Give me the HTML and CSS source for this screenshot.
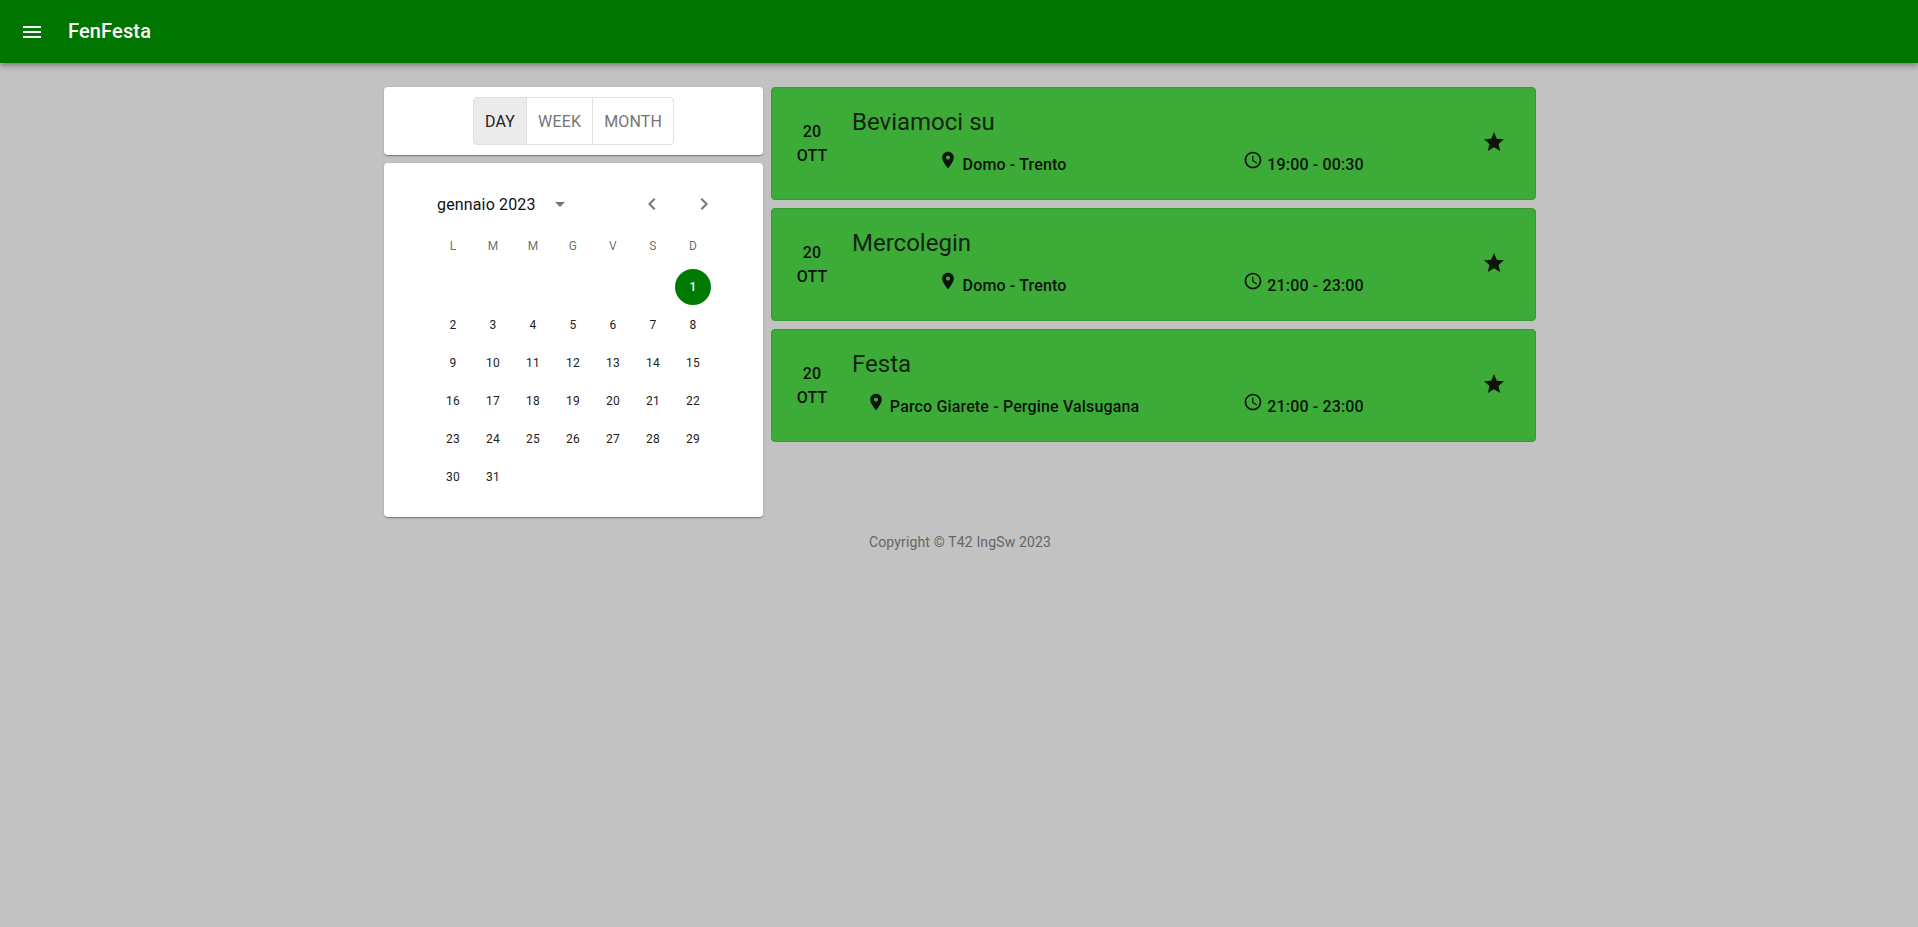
FILE: index.html
```html
<!DOCTYPE html>
<html lang="en">
<head>
    <meta charset="UTF-8">
    <title>FenFesta</title>
    <link rel="stylesheet" href="styles.css">
</head>
<body>
    <header class="app-bar">
        <svg class="menu-icon" viewBox="0 0 24 24"><path d="M3 18h18v-2H3v2zm0-5h18v-2H3v2zm0-7v2h18V6H3z"/></svg>
        <div class="brand">FenFesta</div>
    </header>

    <main class="container">
        <aside class="side">
            <div class="panel toggle-panel">
                <div class="toggle-group">
                    <button class="toggle selected">DAY</button>
                    <button class="toggle">WEEK</button>
                    <button class="toggle">MONTH</button>
                </div>
            </div>
            <div class="panel calendar">
                <div class="cal-header">
                    <span class="cal-month">gennaio 2023</span>
                    <svg class="cal-drop" viewBox="0 0 24 24"><path d="M7 10l5 5 5-5z"/></svg>
                    <svg class="cal-prev" viewBox="0 0 24 24"><path d="M15.41 7.41 14 6l-6 6 6 6 1.41-1.41L10.83 12z"/></svg>
                    <svg class="cal-next" viewBox="0 0 24 24"><path d="M10 6 8.59 7.41 13.17 12l-4.58 4.59L10 18l6-6z"/></svg>
                </div>
                <div class="cal-week">
                    <span>L</span><span>M</span><span>M</span><span>G</span><span>V</span><span>S</span><span>D</span>
                </div>
                <div class="cal-days">
                    <span></span><span></span><span></span><span></span><span></span><span></span><span class="today">1</span>
                    <span>2</span><span>3</span><span>4</span><span>5</span><span>6</span><span>7</span><span>8</span>
                    <span>9</span><span>10</span><span>11</span><span>12</span><span>13</span><span>14</span><span>15</span>
                    <span>16</span><span>17</span><span>18</span><span>19</span><span>20</span><span>21</span><span>22</span>
                    <span>23</span><span>24</span><span>25</span><span>26</span><span>27</span><span>28</span><span>29</span>
                    <span>30</span><span>31</span>
                </div>
            </div>
        </aside>

        <section class="events">
            <article class="event">
                <div class="event-date">20<br>OTT</div>
                <div class="event-body">
                    <h2 class="event-title">Beviamoci su</h2>
                    <div class="event-info">
                        <div class="info-col">
                            <svg class="info-icon" viewBox="0 0 24 24"><path d="M12 2C8.13 2 5 5.13 5 9c0 5.25 7 13 7 13s7-7.75 7-13c0-3.87-3.13-7-7-7zm0 9.5c-1.38 0-2.5-1.12-2.5-2.5s1.12-2.5 2.5-2.5 2.5 1.12 2.5 2.5-1.12 2.5-2.5 2.5z"/></svg>
                            Domo - Trento
                        </div>
                        <div class="info-col">
                            <svg class="info-icon" viewBox="0 0 24 24"><path d="M11.99 2C6.47 2 2 6.48 2 12s4.47 10 9.99 10C17.52 22 22 17.52 22 12S17.52 2 11.99 2zM12 20c-4.42 0-8-3.58-8-8s3.58-8 8-8 8 3.58 8 8-3.58 8-8 8z"/><path d="M12.5 7H11v6l5.25 3.15.75-1.23-4.5-2.67z"/></svg>
                            19:00 - 00:30
                        </div>
                    </div>
                </div>
                <svg class="star" viewBox="0 0 24 24"><path d="M12 17.27 18.18 21l-1.64-7.03L22 9.24l-7.19-.61L12 2 9.19 8.63 2 9.24l5.46 4.73L5.82 21z"/></svg>
            </article>

            <article class="event">
                <div class="event-date">20<br>OTT</div>
                <div class="event-body">
                    <h2 class="event-title">Mercolegin</h2>
                    <div class="event-info">
                        <div class="info-col">
                            <svg class="info-icon" viewBox="0 0 24 24"><path d="M12 2C8.13 2 5 5.13 5 9c0 5.25 7 13 7 13s7-7.75 7-13c0-3.87-3.13-7-7-7zm0 9.5c-1.38 0-2.5-1.12-2.5-2.5s1.12-2.5 2.5-2.5 2.5 1.12 2.5 2.5-1.12 2.5-2.5 2.5z"/></svg>
                            Domo - Trento
                        </div>
                        <div class="info-col">
                            <svg class="info-icon" viewBox="0 0 24 24"><path d="M11.99 2C6.47 2 2 6.48 2 12s4.47 10 9.99 10C17.52 22 22 17.52 22 12S17.52 2 11.99 2zM12 20c-4.42 0-8-3.58-8-8s3.58-8 8-8 8 3.58 8 8-3.58 8-8 8z"/><path d="M12.5 7H11v6l5.25 3.15.75-1.23-4.5-2.67z"/></svg>
                            21:00 - 23:00
                        </div>
                    </div>
                </div>
                <svg class="star" viewBox="0 0 24 24"><path d="M12 17.27 18.18 21l-1.64-7.03L22 9.24l-7.19-.61L12 2 9.19 8.63 2 9.24l5.46 4.73L5.82 21z"/></svg>
            </article>

            <article class="event">
                <div class="event-date">20<br>OTT</div>
                <div class="event-body">
                    <h2 class="event-title">Festa</h2>
                    <div class="event-info">
                        <div class="info-col">
                            <svg class="info-icon" viewBox="0 0 24 24"><path d="M12 2C8.13 2 5 5.13 5 9c0 5.25 7 13 7 13s7-7.75 7-13c0-3.87-3.13-7-7-7zm0 9.5c-1.38 0-2.5-1.12-2.5-2.5s1.12-2.5 2.5-2.5 2.5 1.12 2.5 2.5-1.12 2.5-2.5 2.5z"/></svg>
                            Parco Giarete - Pergine Valsugana
                        </div>
                        <div class="info-col">
                            <svg class="info-icon" viewBox="0 0 24 24"><path d="M11.99 2C6.47 2 2 6.48 2 12s4.47 10 9.99 10C17.52 22 22 17.52 22 12S17.52 2 11.99 2zM12 20c-4.42 0-8-3.58-8-8s3.58-8 8-8 8 3.58 8 8-3.58 8-8 8z"/><path d="M12.5 7H11v6l5.25 3.15.75-1.23-4.5-2.67z"/></svg>
                            21:00 - 23:00
                        </div>
                    </div>
                </div>
                <svg class="star" viewBox="0 0 24 24"><path d="M12 17.27 18.18 21l-1.64-7.03L22 9.24l-7.19-.61L12 2 9.19 8.63 2 9.24l5.46 4.73L5.82 21z"/></svg>
            </article>
        </section>
    </main>

    <footer class="copyright">Copyright © T42 IngSw 2023</footer>
</body>
</html>
```

FILE: styles.css
```css
body {
    margin: 0;
    min-height: 927px;
    background-color: #c2c2c2;
    font-family: Roboto, "Liberation Sans", sans-serif;
    letter-spacing: 0.15px;
    color: #111;
}

.app-bar {
    display: flex;
    align-items: center;
    height: 63px;
    background-color: #007500;
    color: #fff;
    box-shadow: 0 2px 4px -1px rgba(0, 0, 0, 0.2), 0 4px 5px rgba(0, 0, 0, 0.14), 0 1px 10px rgba(0, 0, 0, 0.12);
}

.menu-icon {
    width: 24px;
    height: 24px;
    margin-left: 20px;
    fill: #fff;
}

.brand {
    margin-left: 24px;
    margin-bottom: 1px;
    font-size: 20px;
    font-weight: 500;
}

.container {
    display: flex;
    gap: 8px;
    width: 1152px;
    margin: 24px 0 0 384px;
}

.side {
    display: flex;
    flex-direction: column;
    gap: 8px;
    width: 379px;
    flex-shrink: 0;
}

.panel {
    background-color: #fff;
    border-radius: 4px;
    box-shadow: 0 2px 1px -1px rgba(0, 0, 0, 0.2), 0 1px 1px rgba(0, 0, 0, 0.14), 0 1px 3px rgba(0, 0, 0, 0.12);
}

.toggle-panel {
    display: flex;
    justify-content: center;
    padding: 10px 0;
}

.toggle-group {
    display: flex;
}

.toggle {
    height: 48px;
    padding: 0 11px;
    border: 1px solid #e0e0e0;
    margin-left: -1px;
    background: none;
    font-family: inherit;
    font-size: 16px;
    letter-spacing: 0.15px;
    color: #757575;
}

.toggle:first-child {
    margin-left: 0;
    border-radius: 4px 0 0 4px;
}

.toggle:last-child {
    border-radius: 0 4px 4px 0;
}

.toggle.selected {
    background-color: #ebebeb;
    color: #222;
}

.calendar {
    height: 354px;
    box-sizing: border-box;
    padding: 25px 32px 0 53px;
}

.cal-header {
    display: flex;
    align-items: center;
    height: 32px;
}

.cal-month {
    font-size: 16px;
}

.cal-header svg {
    width: 24px;
    height: 24px;
    fill: rgba(0, 0, 0, 0.54);
}

.cal-drop {
    margin-left: 12px;
}

.cal-prev {
    margin-left: 68px;
}

.cal-next {
    margin-left: 28px;
}

.cal-week,
.cal-days {
    display: grid;
    grid-template-columns: repeat(7, 40px);
    margin-left: -4px;
    font-size: 12px;
    text-align: center;
}

.cal-week {
    margin-top: 6px;
    height: 42px;
    line-height: 40px;
    color: rgba(0, 0, 0, 0.6);
}

.cal-days {
    grid-auto-rows: 38px;
    line-height: 38px;
    color: #222;
}

.today {
    justify-self: center;
    width: 36px;
    height: 36px;
    margin-top: 1px;
    line-height: 36px;
    border-radius: 50%;
    background-color: #007a00;
    color: #fff;
    font-weight: 500;
}

.events {
    flex: 1;
    display: flex;
    flex-direction: column;
    gap: 8px;
}

.event {
    display: flex;
    align-items: center;
    height: 113px;
    box-sizing: border-box;
    border: 1px solid #369b31;
    border-radius: 4px;
    background-color: #3dab37;
    color: #0c150b;
}

.event-date {
    width: 80px;
    flex-shrink: 0;
    text-align: center;
    font-size: 16px;
    font-weight: 500;
    line-height: 24px;
    padding-top: 1px;
}

.event-body {
    flex: 1;
    margin-bottom: 4px;
}

.event-title {
    margin: 0;
    font-size: 24px;
    font-weight: 400;
    letter-spacing: 0;
    line-height: 32px;
    color: #142412;
}

.event-info {
    display: flex;
    margin-top: 12px;
    font-size: 16px;
    font-weight: 500;
    line-height: 24px;
}

.info-col {
    width: 301px;
    text-align: center;
}

.info-icon {
    width: 20px;
    height: 20px;
    fill: #0c150b;
}

.star {
    width: 24px;
    height: 24px;
    margin: 0 29px 3px 0;
    fill: #0c150b;
}

.copyright {
    margin-top: 15px;
    padding-left: 2px;
    text-align: center;
    font-size: 14px;
    line-height: 20px;
    color: #666;
}
```
